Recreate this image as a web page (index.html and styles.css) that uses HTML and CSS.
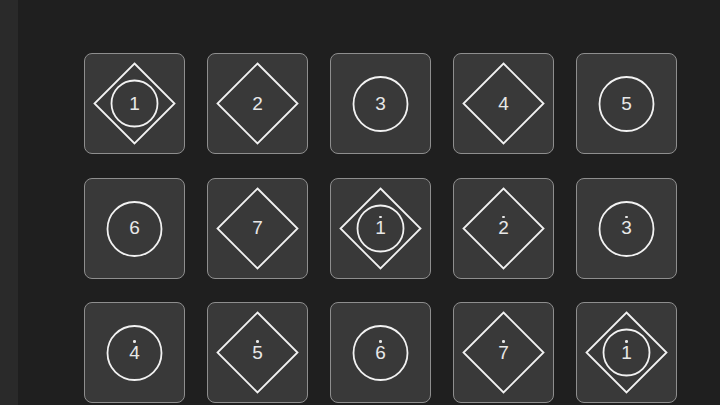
FILE: index.html
```html
<!DOCTYPE html>
<html>
<head>
<meta charset="utf-8">
<link rel="stylesheet" href="styles.css">
</head>
<body>
<div class="app">
  <aside class="strip"></aside>
  <main class="main">
    <div class="grid">
      <div class="tile"><svg class="shape" viewBox="0 0 101 101"><polygon points="50.5,10.5 90.5,50.5 50.5,90.5 10.5,50.5"/><circle cx="50.5" cy="50.5" r="23"/></svg><div class="note"><span class="num">1</span></div></div>
      <div class="tile"><svg class="shape" viewBox="0 0 101 101"><polygon points="50.5,10.5 90.5,50.5 50.5,90.5 10.5,50.5"/></svg><div class="note"><span class="num">2</span></div></div>
      <div class="tile"><svg class="shape" viewBox="0 0 101 101"><circle cx="50.5" cy="51" r="27"/></svg><div class="note"><span class="num">3</span></div></div>
      <div class="tile"><svg class="shape" viewBox="0 0 101 101"><polygon points="50.5,10.5 90.5,50.5 50.5,90.5 10.5,50.5"/></svg><div class="note"><span class="num">4</span></div></div>
      <div class="tile"><svg class="shape" viewBox="0 0 101 101"><circle cx="50.5" cy="51" r="27"/></svg><div class="note"><span class="num">5</span></div></div>

      <div class="tile"><svg class="shape" viewBox="0 0 101 101"><circle cx="50.5" cy="51" r="27"/></svg><div class="note"><span class="num">6</span></div></div>
      <div class="tile"><svg class="shape" viewBox="0 0 101 101"><polygon points="50.5,10.5 90.5,50.5 50.5,90.5 10.5,50.5"/></svg><div class="note"><span class="num">7</span></div></div>
      <div class="tile"><svg class="shape" viewBox="0 0 101 101"><polygon points="50.5,10.5 90.5,50.5 50.5,90.5 10.5,50.5"/><circle cx="50.5" cy="50.5" r="23"/></svg><div class="note high"><span class="dot"></span><span class="num">1</span></div></div>
      <div class="tile"><svg class="shape" viewBox="0 0 101 101"><polygon points="50.5,10.5 90.5,50.5 50.5,90.5 10.5,50.5"/></svg><div class="note high"><span class="dot"></span><span class="num">2</span></div></div>
      <div class="tile"><svg class="shape" viewBox="0 0 101 101"><circle cx="50.5" cy="51" r="27"/></svg><div class="note high"><span class="dot"></span><span class="num">3</span></div></div>

      <div class="tile"><svg class="shape" viewBox="0 0 101 101"><circle cx="50.5" cy="51" r="27"/></svg><div class="note high"><span class="dot"></span><span class="num">4</span></div></div>
      <div class="tile"><svg class="shape" viewBox="0 0 101 101"><polygon points="50.5,10.5 90.5,50.5 50.5,90.5 10.5,50.5"/></svg><div class="note high"><span class="dot"></span><span class="num">5</span></div></div>
      <div class="tile"><svg class="shape" viewBox="0 0 101 101"><circle cx="50.5" cy="51" r="27"/></svg><div class="note high"><span class="dot"></span><span class="num">6</span></div></div>
      <div class="tile"><svg class="shape" viewBox="0 0 101 101"><polygon points="50.5,10.5 90.5,50.5 50.5,90.5 10.5,50.5"/></svg><div class="note high"><span class="dot"></span><span class="num">7</span></div></div>
      <div class="tile"><svg class="shape" viewBox="0 0 101 101"><polygon points="50.5,10.5 90.5,50.5 50.5,90.5 10.5,50.5"/><circle cx="50.5" cy="50.5" r="23"/></svg><div class="note high"><span class="dot"></span><span class="num">1</span></div></div>
    </div>
  </main>
</div>
</body>
</html>
```

FILE: styles.css
```css
html {
  background: #1f1f1f;
}

body {
  margin: 0;
  padding: 0;
  background: #1f1f1f;
  overflow: hidden;
  font-family: "Liberation Sans", Arial, sans-serif;
}

.app {
  display: flex;
  height: 100vh;
  overflow: hidden;
}

.strip {
  width: 18px;
  flex: none;
  background: #2a2a2a;
}

.main {
  flex: 1;
  padding: 53px 0 0 66px;
  overflow: hidden;
  background: #1f1f1f;
}

.grid {
  display: grid;
  grid-template-columns: repeat(5, 101px);
  grid-auto-rows: 101px;
  column-gap: 22px;
  row-gap: 23.5px;
}

.tile {
  box-sizing: border-box;
  width: 101px;
  height: 101px;
  border: 1.5px solid #8e8e8e;
  border-radius: 8px;
  background: #393939;
  display: grid;
  place-items: center;
}

.shape {
  grid-area: 1 / 1;
  width: 101px;
  height: 101px;
  margin: -1.5px;
  fill: none;
  stroke: #f2f2f2;
  stroke-width: 1.8;
}

.note {
  grid-area: 1 / 1;
  display: flex;
  flex-direction: column;
  align-items: center;
  gap: 2px;
  color: #e8e8e8;
}

.num {
  font-size: 19px;
  line-height: 16px;
  display: block;
}

.high {
  margin-top: -4px;
}

.dot {
  width: 2.5px;
  height: 2.5px;
  border-radius: 50%;
  background: #e8e8e8;
}
```
